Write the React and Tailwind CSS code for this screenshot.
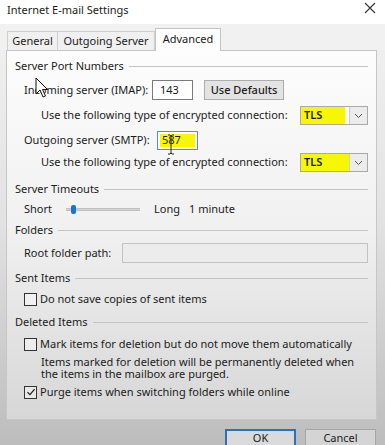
import React from 'react';

const FONT = { fontFamily: '"Noto Sans", "Open Sans", sans-serif' };

function GroupHeader({ label, className = '' }) {
  return (
    <div className={`flex items-center h-[18px] pr-[8px] ${className}`}>
      <span className="whitespace-nowrap">{label}</span>
      <div className="flex-1 h-px bg-[#c4c4c4] ml-[5px]" />
    </div>
  );
}

function Checkbox({ checked }) {
  return (
    <div className="w-[13px] h-[13px] border border-[#333] bg-white/40 flex items-center justify-center flex-shrink-0">
      {checked && (
        <svg width="10" height="10" viewBox="0 0 10 10">
          <path d="M1.5 5.2 L4 7.6 L8.6 2.2" fill="none" stroke="#222" strokeWidth="1.3" />
        </svg>
      )}
    </div>
  );
}

function TlsSelect({ gap }) {
  return (
    <div className="ml-auto flex h-[19px] w-[68px] border border-[#a9a9a9] bg-white">
      <div className={`bg-[#f7f700] flex items-center pl-[3px] font-semibold ${gap ? 'w-[44px]' : 'w-[49px]'}`}>TLS</div>
      <div className="flex-1" />
      <div className="w-[18px] border-l border-[#cfcfcf] bg-[#ececec] flex items-center justify-center">
        <svg width="9" height="6" viewBox="0 0 9 6">
          <path d="M1 1 L4.5 4.5 L8 1" fill="none" stroke="#555" strokeWidth="1" />
        </svg>
      </div>
    </div>
  );
}

export default function App() {
  return (
    <div
      className="relative w-[385px] h-[445px] overflow-hidden text-[11px] text-[#1b1b1b] bg-gradient-to-b from-[#f3f3f3] via-[#e2e2e2] to-[#bdbdbd]"
      style={FONT}
    >
      {/* Title bar */}
      <div className="h-[24px] bg-white flex items-center pl-[7px] pr-[9px]">
        <span className="text-[11px] leading-none -mt-[6px]">Internet E-mail Settings</span>
        <svg className="ml-auto -mt-[9px]" width="12" height="12" viewBox="0 0 12 12">
          <path d="M1 1 L11 11 M11 1 L1 11" stroke="#333" strokeWidth="1.1" />
        </svg>
      </div>

      {/* Tabs */}
      <div className="flex items-end h-[26px] pl-[7px] bg-[#f1f1f1]">
        <div className="h-[19px] w-[51px] border border-b-0 border-[#cfcfcf] bg-[#f0f0f0] flex items-center justify-center">General</div>
        <div className="h-[19px] w-[97px] border border-b-0 border-l-0 border-[#cfcfcf] bg-[#f0f0f0] flex items-center justify-center">Outgoing Server</div>
        <div className="relative z-10 h-[23px] w-[66px] -mb-px border border-b-0 border-[#c4c4c4] bg-[#fdfdfd] flex items-center justify-center pb-[2px]">Advanced</div>
      </div>

      {/* Panel */}
      <div className="ml-[6px] w-[371px] h-[370px] border border-[#c6c6c6] bg-gradient-to-b from-[#fdfdfd] via-[#f0f0f0] to-[#d7d7d7] pl-[8px] flex flex-col">
        <GroupHeader label="Server Port Numbers" className="mt-[6px]" />

        <div className="mt-[5px] h-[20px] flex items-center pl-[9px]">
          <span className="w-[128px]">Incoming server (IMAP):</span>
          <div className="w-[41px] h-[20px] border border-[#7a7a7a] bg-white flex items-center pl-[7px]">143</div>
          <div className="ml-[11px] w-[80px] h-[20px] border border-[#adadad] bg-[#e3e3e3] flex items-center justify-center font-medium">Use Defaults</div>
        </div>

        <div className="mt-[6px] h-[19px] flex items-center pl-[26px] pr-[8px]">
          <span>Use the following type of encrypted connection:</span>
          <TlsSelect gap />
        </div>

        <div className="mt-[6px] h-[18px] flex items-center pl-[9px]">
          <span className="w-[133px]">Outgoing server (SMTP):</span>
          <div className="w-[41px] h-[19px] border border-[#4a90d9] bg-white p-[2px]">
            <div className="h-full bg-[#f7f700] flex items-center pl-[2px]">587</div>
          </div>
        </div>

        <div className="mt-[4px] h-[19px] flex items-center pl-[26px] pr-[8px]">
          <span>Use the following type of encrypted connection:</span>
          <TlsSelect />
        </div>

        <GroupHeader label="Server Timeouts" className="mt-[8px]" />

        <div className="mt-[2px] h-[18px] flex items-center pl-[9px]">
          <span className="w-[42px]">Short</span>
          <div className="relative w-[74px] h-[3px] bg-[#d2d2d2] border-y border-[#c0c0c0]">
            <div className="absolute left-[5px] -top-[4px] w-[5px] h-[9px] rounded-[2px] bg-[#1a73d1]" />
          </div>
          <span className="ml-[14px]">Long</span>
          <span className="ml-[9px]">1 minute</span>
        </div>

        <GroupHeader label="Folders" className="mt-[3px]" />

        <div className="mt-[4px] h-[20px] flex items-center pl-[9px] pr-[8px]">
          <span className="w-[98px]">Root folder path:</span>
          <div className="flex-1 h-[20px] border border-[#c2c2c2] bg-[#ececec]" />
        </div>

        <GroupHeader label="Sent Items" className="mt-[6px]" />

        <div className="mt-[3px] h-[18px] flex items-center pl-[9px] gap-[3px]">
          <Checkbox />
          <span>Do not save copies of sent items</span>
        </div>

        <GroupHeader label="Deleted Items" className="mt-[5px]" />

        <div className="mt-[4px] h-[18px] flex items-center pl-[9px] gap-[3px]">
          <Checkbox />
          <span>Mark items for deletion but do not move them automatically</span>
        </div>

        <div className="mt-[3px] pl-[26px] leading-[12px]">
          <div>Items marked for deletion will be permanently deleted when</div>
          <div>the items in the mailbox are purged.</div>
        </div>

        <div className="mt-[3px] h-[18px] flex items-center pl-[9px] gap-[3px]">
          <Checkbox checked />
          <span>Purge items when switching folders while online</span>
        </div>
      </div>

      {/* Buttons */}
      <div className="mt-[9px] flex justify-end gap-[9px] pr-[9px]">
        <div className="w-[71px] h-[24px] border-2 border-[#2f6fb7] bg-[#dadada] flex items-start justify-center leading-[13px]">OK</div>
        <div className="w-[71px] h-[24px] border border-[#a5a5a5] bg-[#d4d4d4] flex items-start justify-center pt-[1px] leading-[13px]">Cancel</div>
      </div>

      {/* Mouse pointer overlay */}
      <svg className="absolute left-[35px] top-[77px]" width="14" height="22" viewBox="0 0 14 22">
        <path d="M1 1 L1 17 L5 13 L8 20 L10.5 19 L7.5 12.5 L12.5 12.5 Z" fill="white" stroke="#111" strokeWidth="1" strokeLinejoin="round" />
      </svg>
      {/* I-beam cursor overlay */}
      <svg className="absolute left-[167px] top-[134px]" width="8" height="22" viewBox="0 0 8 22">
        <path d="M1 1 L3 1 L4 2 L5 1 L7 1 M4 2 L4 19 M1 20 L3 20 L4 19 L5 20 L7 20" fill="none" stroke="#222" strokeWidth="1" />
      </svg>
    </div>
  );
}
